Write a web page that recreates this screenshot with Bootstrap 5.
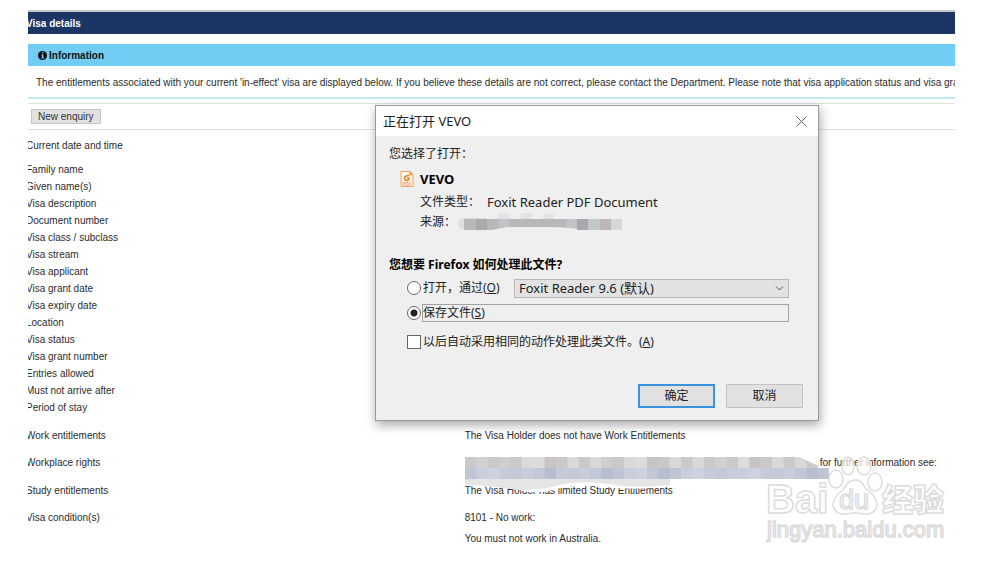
<!DOCTYPE html>
<html lang="en">
<head>
<meta charset="utf-8">
<meta name="viewport" content="width=device-width, initial-scale=1">
<title>Visa details</title>
<link href="https://cdn.jsdelivr.net/npm/bootstrap@5.3.0/dist/css/bootstrap.min.css" rel="stylesheet">
<style>
body { font-family: "Liberation Sans", Arial, sans-serif; font-size: 10px; line-height: 17px; color: #2b2b2b; background: #fff; }
.sheet { margin: 10px 45px 0 28px; overflow: hidden; }
.title-bar { background: #1b3665; border-top: 2px solid #c4c6ca; height: 24px; line-height: 23px; font-size: 10px; font-weight: 700; color: #fff; }
.info-title { background: #71cdf4; height: 22px; font-size: 10px; line-height: 22px; font-weight: 700; color: #111; padding: 1px 0 0 10px; margin-top: 10px; gap: 2px; }
.info-text { border-bottom: 2px solid #c3e9fb; height: 33px; line-height: 33px; padding-left: 8px; white-space: nowrap; }
.toolbar { border-top: 1px solid #e0e0e0; border-bottom: 1px solid #e0e0e0; height: 27px; margin-top: 4px; padding-left: 3px; }
.btn-enquiry { font-size: 10px; line-height: 13px; padding: 0 6px; border: 1px solid #c6c6c6; border-radius: 0; background: #e1e1e1; color: #333; }
.shifted { margin-left: -2px; }
.details th, .details td { padding: 0; font-weight: 400; vertical-align: top; white-space: nowrap; }
.details td { padding-left: 2px; }
.details th { width: 47%; }
.details tr.gap-above > * { padding-top: 7px; }
.details tr.gap-large > * { padding-top: 11px; }
.details tr.gap-medium > * { padding-top: 10px; }
.details tr.gap-last > * { padding-top: 4px; }
.mosaic-rights { left: 2px; top: 13px; z-index: 1; }
.further { margin-left: 355px; z-index: 2; }

.dialog-window { left: 375px; top: 105px; width: 444px; z-index: 5; background: #efefef; border: 1px solid #9b9b9b; box-shadow: 1px 4px 10px rgba(0,0,0,.35); font-family: "Noto Sans", "Noto Sans CJK SC", sans-serif; font-size: 12px; line-height: 18px; color: #222; }
.dialog-title { height: 30px; padding: 0 11px 0 7px; background: #fff; font-size: 13px; }
.btn-x { line-height: 0; color: #666; }
.dialog-content { padding: 9px 15px 12px 13px; }
.strong-line { font-weight: 700; color: #000; }
.size-13 { font-size: 13px; }
.file-info { margin: 7px 0 0 11px; gap: 6px; }
.type-line { margin-top: 5px; }
.type-label { margin-right: 7px; }
.source-line { margin-top: 2px; height: 18px; }
.question { margin: 25px 0 5px; font-size: 12px; line-height: 18px; }
.choices { margin: 0 14px 0 18px; }
.choices label { white-space: nowrap; }
.choices .form-check-input { width: 14px; height: 14px; margin: 0 2px 0 0; border: 1px solid #666; background-color: #fff; box-shadow: none; flex: none; }
.choices .form-check-input[type=checkbox] { border-radius: 0; }
.choices .form-check-input[type=radio]:checked { border-color: #666; background-color: #fff; background-image: radial-gradient(circle, #222 3px, transparent 4px); }
.choice { height: 18px; }
.open-label { width: 91px; }
.save-choice { margin-top: 7px; }
.always-choice { margin-top: 11px; }
.app-select { font-size: 13px; line-height: 17px; height: 19px; min-height: 0; padding: 0 24px 0 4px; border: 1px solid #b9b9b9; border-radius: 0; color: #222; background-color: #e2e2e2; background-size: 9px 9px; background-position: right 4px center; background-image: url("data:image/svg+xml,%3csvg xmlns='http://www.w3.org/2000/svg' viewBox='0 0 9 9'%3e%3cpath fill='none' stroke='%23555' d='M1 2.5l3.500 3.500 3.500-3.500'/%3e%3c/svg%3e"); }
.focus-label { border: 1px solid #a3a3a3; line-height: 16px; height: 18px; margin-left: -1px; }
.dialog-buttons { gap: 11px; margin-top: 33px; }
.btn-dialog { width: 77px; height: 24px; padding: 0; font-size: 12px; line-height: 20px; border: 1px solid #c2c2c2; border-radius: 0; background: #e1e1e1; color: #222; }
.btn-dialog.is-default { border: 2px solid #3b92dc; }
.watermark { left: 764px; top: 456px; z-index: 6; pointer-events: none; }
</style>
</head>
<body>
<main class="sheet">
  <h1 class="title-bar m-0"><span class="d-block shifted">Visa details</span></h1>
  <section>
    <h2 class="info-title d-flex align-items-center mb-0">
      <svg width="9" height="9" viewBox="0 0 9 9" aria-hidden="true"><circle cx="4.500" cy="4.500" r="4.500" fill="#111"/><path d="M4 1.200h1.500v1.300H4zM3.200 3.500h2.200v3h.7v1H3.200v-1h.8v-2h-.8z" fill="#71cdf4"/></svg>Information
    </h2>
    <p class="info-text m-0 overflow-hidden">The entitlements associated with your current 'in-effect' visa are displayed below. If you believe these details are not correct, please contact the Department. Please note that visa application status and visa grants that</p>
  </section>
  <div class="toolbar d-flex align-items-center"><button type="button" class="btn btn-enquiry">New enquiry</button></div>
  <div class="shifted">
    <table class="details w-100">
      <tbody>
        <tr class="gap-above"><th scope="row">Current date and time</th><td></td></tr>
        <tr class="gap-above"><th scope="row">Family name</th><td></td></tr>
        <tr><th scope="row">Given name(s)</th><td></td></tr>
        <tr><th scope="row">Visa description</th><td></td></tr>
        <tr><th scope="row">Document number</th><td></td></tr>
        <tr><th scope="row">Visa class / subclass</th><td></td></tr>
        <tr><th scope="row">Visa stream</th><td></td></tr>
        <tr><th scope="row">Visa applicant</th><td></td></tr>
        <tr><th scope="row">Visa grant date</th><td></td></tr>
        <tr><th scope="row">Visa expiry date</th><td></td></tr>
        <tr><th scope="row">Location</th><td></td></tr>
        <tr><th scope="row">Visa status</th><td></td></tr>
        <tr><th scope="row">Visa grant number</th><td></td></tr>
        <tr><th scope="row">Entries allowed</th><td></td></tr>
        <tr><th scope="row">Must not arrive after</th><td></td></tr>
        <tr><th scope="row">Period of stay</th><td></td></tr>
        <tr class="gap-large"><th scope="row">Work entitlements</th><td>The Visa Holder does not have Work Entitlements</td></tr>
        <tr class="gap-medium"><th scope="row">Workplace rights</th><td class="position-relative">
          <svg class="mosaic-rights position-absolute" width="364" height="40" viewBox="0 0 364 40" aria-hidden="true">
            <path fill="#fff" d="M0 22H205V29Q180 33 150 31Q120 26 95 31L80 35H62Q40 29 0 29z"/>
            <path fill="#e5e5e6" d="M0 22H205V28Q180 31 155 29Q120 22 95 28Q70 35 45 32Q20 28 0 28z"/>
            <g id="tiles"></g>
          </svg>
          <span class="further position-relative">for further information see:</span></td></tr>
        <tr class="gap-large"><th scope="row">Study entitlements</th><td>The Visa Holder has limited Study Entitlements</td></tr>
        <tr class="gap-medium"><th scope="row">Visa condition(s)</th><td>8101 - No work:</td></tr>
        <tr class="gap-last"><td></td><td>You must not work in Australia.</td></tr>
      </tbody>
    </table>
  </div>
</main>

<section class="dialog-window position-absolute" role="dialog" aria-labelledby="dlgTitle" lang="zh-CN">
  <header class="dialog-title d-flex align-items-center justify-content-between">
    <span id="dlgTitle">正在打开 VEVO</span>
    <button type="button" class="btn-x border-0 bg-transparent p-0" aria-label="关闭"><svg width="11" height="11" viewBox="0 0 11 11"><path d="M.5.5l10 10M10.500.5l-10 10" stroke="currentColor" fill="none"/></svg></button>
  </header>
  <form class="dialog-content">
    <div>您选择了打开：</div>
    <div class="file-info d-flex">
      <svg width="14" height="18" viewBox="0 0 14 18" aria-hidden="true"><path d="M1 1.500h9l3 3v12H1z" fill="#fff8f0" stroke="#f0a35c"/><path d="M9.500 1v4H13z" fill="#f08a2c"/><path d="M9.500 5.500Q5 5 4.500 8.300Q4.500 10.500 7 10.500Q9 10.300 8.800 8H7" fill="none" stroke="#f08020" stroke-width="1.600"/><text x="7" y="16" font-size="5" font-weight="700" text-anchor="middle" fill="#f0a35c">PDF</text></svg>
      <div>
        <div class="strong-line size-13">VEVO</div>
        <div class="d-flex type-line"><span class="type-label">文件类型：</span><span class="size-13">Foxit Reader PDF Document</span></div>
        <div class="d-flex source-line"><span>来源：</span>
          <svg width="168" height="20" viewBox="0 0 168 20" aria-hidden="true">
            <path fill="#dedede" d="M8 5Q2 6 2 11Q3 17 10 17H30V5z"/>
            <path fill="#e3e3e3" d="M42 0h11v6H42zM65 0h11v6H65zM87 1h11v5H87z"/>
            <path fill="#b8b8b8" d="M8 6H144V17H132Q110 14 95 14H50L36 17H8z"/>
            <path fill="#aaa9ad" d="M20 6h11v11H20z"/><path fill="#c1c3c9" d="M42 6h11v8H42zM110 6h11v9h-11z"/><path fill="#aaa9aa" d="M121 6h11v11h-11z"/><path fill="#c4c8c8" d="M132 6h12v11h-12z"/><path fill="#bfb7b7" d="M144 6h11v11h-11z"/><path fill="#d3d8da" d="M155 6h11v11h-11z"/>
          </svg></div>
      </div>
    </div>
    <fieldset>
      <legend class="question strong-line">您想要 Firefox 如何处理此文件?</legend>
      <div class="choices">
        <div class="choice d-flex align-items-center">
          <input class="form-check-input" type="radio" name="action" id="actOpen">
          <label for="actOpen" class="open-label flex-shrink-0">打开，通过(<u>O</u>)</label>
          <select class="form-select app-select flex-fill" aria-label="打开，通过"><option>Foxit Reader 9.6 (默认)</option></select>
        </div>
        <div class="choice save-choice d-flex align-items-center">
          <input class="form-check-input" type="radio" name="action" id="actSave" checked>
          <label for="actSave" class="focus-label flex-fill">保存文件(<u>S</u>)</label>
        </div>
        <div class="choice always-choice d-flex align-items-center">
          <input class="form-check-input" type="checkbox" id="always">
          <label for="always">以后自动采用相同的动作处理此类文件。(<u>A</u>)</label>
        </div>
      </div>
    </fieldset>
    <div class="dialog-buttons d-flex justify-content-end">
      <button type="button" class="btn btn-dialog is-default">确定</button>
      <button type="button" class="btn btn-dialog">取消</button>
    </div>
  </form>
</section>

<svg class="watermark position-absolute" width="190" height="92" viewBox="0 0 190 92" role="img" aria-label="Baidu 经验 jingyan.baidu.com">
  <g fill="#fff" stroke="#dcdcdc" stroke-width="1.500" font-family="Liberation Sans, Noto Sans CJK SC, sans-serif">
    <text x="2" y="57" font-size="40" font-weight="700">Bai</text>
    <g fill-opacity=".7"><ellipse cx="72" cy="23" rx="7" ry="9"/><ellipse cx="84" cy="10" rx="6" ry="9"/><ellipse cx="100" cy="10" rx="7" ry="9"/><ellipse cx="111" cy="26" rx="7" ry="9"/></g>
    <path d="M91 24Q98 24 101 32Q113 40 113 49Q111 59 100 58Q91 56 82 58Q70 59 69 48Q70 40 79 34Q84 24 91 24z"/>
    <text x="75" y="53" font-size="27">du</text>
    <text x="118" y="55" font-size="31" font-weight="900">经验</text>
    <text x="3" y="81" font-size="22">jingyan.baidu.com</text>
  </g>
</svg>

<script>
// Censor tiles: two rows of muted squares over the workplace rights text
const rows = [
  ["#cbcacb","#d5d0d0","#c9c9cb","#cfcdcd","#cac9c8","#dadadb","#dcdcdd","#c8c3c5","#cac9ca","#d9d9da","#c9c9ca","#d8d8d8"],
  ["#c0c5d4","#c9cedb","#ced2de","#c7cbd8","#c4c9d7","#c9cdd9","#c1c7d5","#b6bfd0"]
];
let out = "";
rows.forEach((colors, r) => {
  const count = r ? 32 : 31;
  for (let i = 0; i < count; i++) {
    const c = colors[(i + Math.floor(i / colors.length) * 3) % colors.length];
    out += `<rect x="${i * 364 / 32}" y="${r * 11}" width="12" height="11" fill="${c}"/>`;
  }
});
out += '<path d="M334 0H364V11H358z" fill="#fff"/>';
document.getElementById("tiles").innerHTML = out;
</script>
<script src="https://cdn.jsdelivr.net/npm/bootstrap@5.3.0/dist/js/bootstrap.bundle.min.js"></script>
</body>
</html>
